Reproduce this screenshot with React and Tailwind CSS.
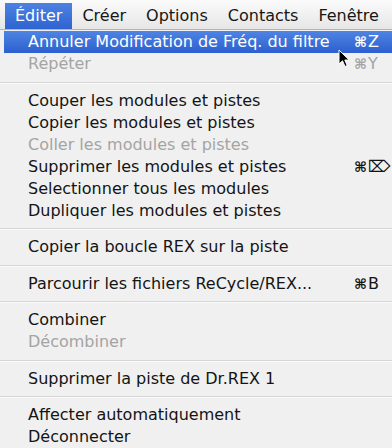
import React from "react";

const items = [
  { t: "Annuler Modification de Fréq. du filtre", k: "Z", hl: true },
  { t: "Répéter", k: "Y", dis: true },
  { sep: 15 },
  { t: "Couper les modules et pistes" },
  { t: "Copier les modules et pistes" },
  { t: "Coller les modules et pistes", dis: true },
  { t: "Supprimer les modules et pistes", k: "⌦" },
  { t: "Selectionner tous les modules" },
  { t: "Dupliquer les modules et pistes" },
  { sep: 14 },
  { t: "Copier la boucle REX sur la piste" },
  { sep: 15 },
  { t: "Parcourir les fichiers ReCycle/REX...", k: "B" },
  { sep: 14 },
  { t: "Combiner" },
  { t: "Décombiner", dis: true },
  { sep: 15 },
  { t: "Supprimer la piste de Dr.REX 1" },
  { sep: 14 },
  { t: "Affecter automatiquement" },
  { t: "Déconnecter" },
];

const bar = ["Éditer", "Créer", "Options", "Contacts", "Fenêtre"];

export default function App() {
  return (
    <div
      className="relative w-[392px] h-[448px] overflow-hidden bg-[#f0f0f0]"
      style={{ fontFamily: '"DejaVu Sans", sans-serif' }}
    >
      <div className="h-[30px] flex pl-[5px] pt-[3px] bg-gradient-to-b from-[#fbfbfb] to-[#e6e6e6] border-b border-[#b4b4b4]">
        {bar.map((b, i) => (
          <div
            key={b}
            className={
              i === 0
                ? "px-[10px] flex items-center text-[16px] leading-none text-white bg-gradient-to-b from-[#4d82e2] to-[#2f63d2]"
                : "px-[10px] flex items-center text-[16px] leading-none text-[#161616]"
            }
          >
            {b}
          </div>
        ))}
      </div>
      <div className="pt-[1px] flex flex-col">
        {items.map((it, i) =>
          it.sep ? (
            <div
              key={i}
              className={
                it.sep === 15
                  ? "h-[15px] flex flex-col justify-center"
                  : "h-[14px] flex flex-col justify-center"
              }
            >
              <div className="h-[1px] bg-[#d6d6d6]" />
              <div className="h-[1px] bg-[#fafafa]" />
            </div>
          ) : (
            <div
              key={i}
              className={
                it.hl
                  ? "ml-[4px] h-[22px] flex items-center pl-[24px] text-[16px] leading-none text-white bg-gradient-to-b from-[#4f84e3] to-[#2c5fcf]"
                  : it.dis
                  ? "ml-[4px] h-[22px] flex items-center pl-[24px] text-[16px] leading-none text-[#a4a4a4]"
                  : "ml-[4px] h-[22px] flex items-center pl-[24px] text-[16px] leading-none text-[#141414]"
              }
            >
              <span className="flex-1 whitespace-nowrap">{it.t}</span>
              {it.k && (
                <span className="flex items-center">
                  <span className="w-[14px] text-right text-[14px] font-bold">⌘</span>
                  <span className="w-[25px] pl-[1px]">{it.k}</span>
                </span>
              )}
            </div>
          )
        )}
      </div>
      <svg
        className="absolute left-[338px] top-[49px]"
        width="13"
        height="19"
        viewBox="0 0 13 19"
      >
        <path
          d="M1 1 L1 15 L4.5 11.8 L7 17.5 L9.2 16.5 L6.8 11 L11.2 11 Z"
          fill="#000"
          stroke="#fff"
          strokeWidth="1"
          strokeLinejoin="round"
        />
      </svg>
    </div>
  );
}
